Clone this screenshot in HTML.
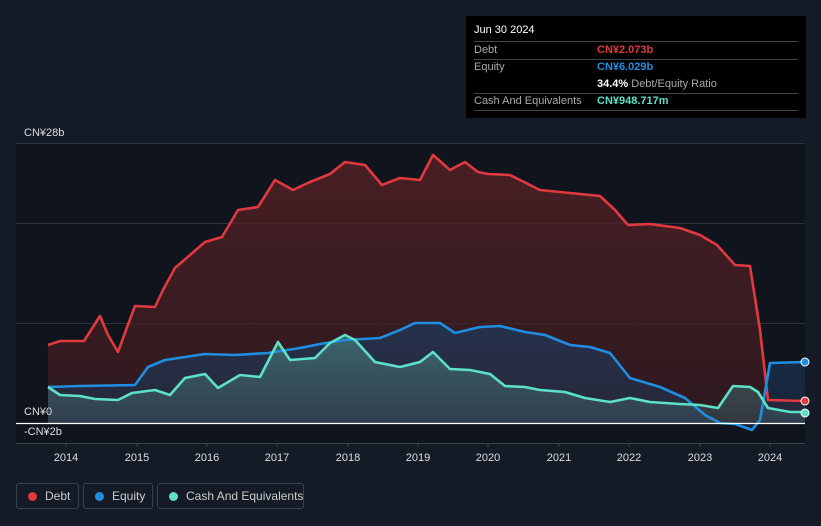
<!DOCTYPE html>
<html style="margin:0;width:821px;height:526px;overflow:hidden"><head><meta charset="utf-8"><style>
body{margin:0;width:821px;height:526px;background:#151b26;font-family:"Liberation Sans","Noto Sans CJK SC",sans-serif;overflow:hidden;position:relative}
.tt{position:absolute;left:466px;top:16px;width:340px;height:102px;background:#000;color:#fff;font-size:11px}
.tt .r{position:absolute;left:8px;right:8px;border-bottom:1px solid #444;height:17px;line-height:17px}
.tt .l{color:#aaa}
.tt .v{position:absolute;left:123px;top:0;font-weight:bold}
.leg{position:absolute;top:483px;height:26px;border:1px solid #3a404b;border-radius:3px;color:#ccc;font-size:12px;line-height:24px;box-sizing:border-box;white-space:nowrap}
.leg i{position:absolute;left:11px;top:8px;width:9px;height:9px;border-radius:50%}
.leg span{position:absolute;left:28px}
</style></head><body>
<svg width="821" height="526" style="position:absolute;left:0;top:0">
<defs>
<linearGradient id="gd" x1="0" y1="0" x2="0" y2="1"><stop offset="0" stop-color="#5a2226" stop-opacity=".75"/><stop offset="1" stop-color="#3a1c20" stop-opacity=".7"/></linearGradient>
<linearGradient id="ge" x1="0" y1="0" x2="0" y2="1"><stop offset="0" stop-color="#1d3a5e" stop-opacity=".7"/><stop offset="1" stop-color="#1d3a5e" stop-opacity=".4"/></linearGradient>
<linearGradient id="gc" x1="0" y1="0" x2="0" y2="1"><stop offset="0" stop-color="#4a8a86" stop-opacity=".6"/><stop offset="1" stop-color="#3a5560" stop-opacity=".5"/></linearGradient>
</defs>
<rect x="16" y="143" width="789" height="300" fill="#10141c"/>
<g stroke="#2e333c" stroke-width="1">
<line x1="16" y1="143.5" x2="805" y2="143.5"/><line x1="16" y1="223.5" x2="805" y2="223.5"/><line x1="16" y1="323.5" x2="805" y2="323.5"/><line x1="16" y1="443.5" x2="805" y2="443.5" stroke="#3a404b"/>
</g>
<path d="M48,345 L60,341 84,341 100,316 108,335 118,352 126,330 135,306 155,307 163,290 175,268 190,255 205,242 222,237 238,210 258,207 275,180 293,190 310,182 330,174 345,162 365,165 382,185 400,178 420,180 433,155 450,170 465,162 478,172 488,174 510,175 540,190 570,193 600,196 615,210 628,225 650,224 680,228 700,235 717,245 735,265 750,266 760,330 768,400 805,401 L805,423 L48,423Z" fill="url(#gd)"/>
<path d="M48,387 L80,386 135,385 148,367 165,360 205,354 235,355 268,353 300,348 320,344 345,340 380,338 400,330 415,323 440,323 455,333 480,327 500,326 525,332 545,335 570,345 590,347 610,353 630,378 660,387 685,398 705,415 720,423 735,424 752,430 760,420 770,363 805,362 L805,423 L48,423Z" fill="url(#ge)"/>
<path d="M48,387 L60,395 80,396 95,399 118,400 132,393 155,390 170,395 185,378 205,374 218,388 240,375 260,377 278,342 290,360 315,358 330,343 345,335 355,340 375,362 400,367 420,362 433,352 450,369 470,370 490,374 505,386 525,387 540,390 565,392 585,398 610,402 630,398 650,402 680,404 700,405 718,408 733,386 750,387 758,392 768,408 790,412 805,412 L805,423 L48,423Z" fill="url(#gc)"/>
<g fill="none" stroke-width="2.6" stroke-linejoin="round">
<path d="M48,345 L60,341 84,341 100,316 108,335 118,352 126,330 135,306 155,307 163,290 175,268 190,255 205,242 222,237 238,210 258,207 275,180 293,190 310,182 330,174 345,162 365,165 382,185 400,178 420,180 433,155 450,170 465,162 478,172 488,174 510,175 540,190 570,193 600,196 615,210 628,225 650,224 680,228 700,235 717,245 735,265 750,266 760,330 768,400 805,401" stroke="#e0393e"/>
<path d="M48,387 L80,386 135,385 148,367 165,360 205,354 235,355 268,353 300,348 320,344 345,340 380,338 400,330 415,323 440,323 455,333 480,327 500,326 525,332 545,335 570,345 590,347 610,353 630,378 660,387 685,398 705,415 720,423 735,424 752,430 760,420 770,363 805,362" stroke="#1f8ee0"/>
<path d="M48,387 L60,395 80,396 95,399 118,400 132,393 155,390 170,395 185,378 205,374 218,388 240,375 260,377 278,342 290,360 315,358 330,343 345,335 355,340 375,362 400,367 420,362 433,352 450,369 470,370 490,374 505,386 525,387 540,390 565,392 585,398 610,402 630,398 650,402 680,404 700,405 718,408 733,386 750,387 758,392 768,408 790,412 805,412" stroke="#5ce0c8"/>
</g>
<line x1="16" y1="423.5" x2="805" y2="423.5" stroke="#fff" stroke-width="1.3"/>
<circle cx="805" cy="362" r="4" fill="#1f8ee0" stroke="#fff"/>
<circle cx="805" cy="401" r="4" fill="#e0393e" stroke="#fff"/>
<circle cx="805" cy="413" r="4" fill="#5ce0c8" stroke="#fff"/>
<g fill="#ddd" font-size="11" font-family="Liberation Sans,Noto Sans CJK SC,sans-serif">
<text x="24" y="136">CN¥28b</text><text x="24" y="415">CN¥0</text><text x="24" y="435">-CN¥2b</text>
<g text-anchor="middle"><text x="66" y="461">2014</text><text x="137" y="461">2015</text><text x="207" y="461">2016</text><text x="277" y="461">2017</text><text x="348" y="461">2018</text><text x="418" y="461">2019</text><text x="488" y="461">2020</text><text x="559" y="461">2021</text><text x="629" y="461">2022</text><text x="700" y="461">2023</text><text x="770" y="461">2024</text></g>
</g>
<g stroke="#3a404b"><line x1="66" y1="443" x2="66" y2="447"/><line x1="137" y1="443" x2="137" y2="447"/><line x1="207" y1="443" x2="207" y2="447"/><line x1="277" y1="443" x2="277" y2="447"/><line x1="348" y1="443" x2="348" y2="447"/><line x1="418" y1="443" x2="418" y2="447"/><line x1="488" y1="443" x2="488" y2="447"/><line x1="559" y1="443" x2="559" y2="447"/><line x1="629" y1="443" x2="629" y2="447"/><line x1="700" y1="443" x2="700" y2="447"/><line x1="770" y1="443" x2="770" y2="447"/></g>
</svg>
<div class="tt">
<div style="position:absolute;left:8px;top:8px">Jun 30 2024</div>
<div class="r" style="top:25px;border-top:1px solid #444"><span class="l">Debt</span><span class="v" style="color:#e0393e">CN¥2.073b</span></div>
<div class="r" style="top:43px;border-bottom:none"><span class="l">Equity</span><span class="v" style="color:#1f8ee0">CN¥6.029b</span></div>
<div class="r" style="top:60px"><span class="v">34.4% <span style="color:#aaa;font-weight:normal">Debt/Equity Ratio</span></span></div>
<div class="r" style="top:77px"><span class="l">Cash And Equivalents</span><span class="v" style="color:#5ce0c8">CN¥948.717m</span></div>
</div>
<div class="leg" style="left:16px;width:63px"><i style="background:#e0393e"></i><span>Debt</span></div>
<div class="leg" style="left:83px;width:70px"><i style="background:#1f8ee0"></i><span>Equity</span></div>
<div class="leg" style="left:157px;width:147px"><i style="background:#5ce0c8"></i><span>Cash And Equivalents</span></div>
</body></html>
